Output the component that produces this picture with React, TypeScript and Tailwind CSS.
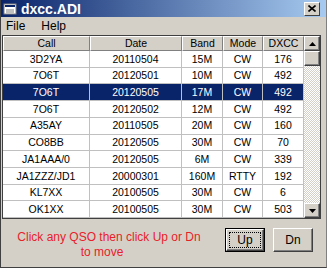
import React from 'react';

type Row = { call: string; date: string; band: string; mode: string; dxcc: string };

const rows: Row[] = [
  { call: '3D2YA', date: '20110504', band: '15M', mode: 'CW', dxcc: '176' },
  { call: '7O6T', date: '20120501', band: '10M', mode: 'CW', dxcc: '492' },
  { call: '7O6T', date: '20120505', band: '17M', mode: 'CW', dxcc: '492' },
  { call: '7O6T', date: '20120502', band: '12M', mode: 'CW', dxcc: '492' },
  { call: 'A35AY', date: '20110505', band: '20M', mode: 'CW', dxcc: '160' },
  { call: 'CO8BB', date: '20120505', band: '30M', mode: 'CW', dxcc: '70' },
  { call: 'JA1AAA/0', date: '20120505', band: '6M', mode: 'CW', dxcc: '339' },
  { call: 'JA1ZZZ/JD1', date: '20000301', band: '160M', mode: 'RTTY', dxcc: '192' },
  { call: 'KL7XX', date: '20100505', band: '30M', mode: 'CW', dxcc: '6' },
  { call: 'OK1XX', date: '20100505', band: '30M', mode: 'CW', dxcc: '503' },
];

const selected = 2;

const cols = [
  { key: 'call', label: 'Call', w: 'w-[87px]' },
  { key: 'date', label: 'Date', w: 'w-[92px]' },
  { key: 'band', label: 'Band', w: 'w-[41px]' },
  { key: 'mode', label: 'Mode', w: 'w-[40px]' },
  { key: 'dxcc', label: 'DXCC', w: 'w-[41px]' },
] as const;

function ScrollButton({ up }: { up?: boolean }) {
  return (
    <div className="flex h-[15px] w-[16px] items-center justify-center border border-t-white border-l-white border-b-[#404040] border-r-[#404040] bg-[#d4d0c8] shadow-[inset_-1px_-1px_0_#808080]">
      <svg width="7" height="4" viewBox="0 0 7 4">
        {up ? <polygon points="3.5,0 7,4 0,4" fill="#000" /> : <polygon points="0,0 7,0 3.5,4" fill="#000" />}
      </svg>
    </div>
  );
}

export default function App() {
  return (
    <div
      className="flex h-[268px] w-[327px] flex-col overflow-hidden border-b border-l border-r border-b-[#404040] border-l-[#404040] border-r-[#808080] bg-[#d4d0c8] text-black"
      style={{ fontFamily: '"Liberation Sans", Arial, sans-serif' }}
    >
      {/* Title bar */}
      <div className="flex h-[17px] shrink-0 items-center bg-[linear-gradient(to_right,#0a246a,#a6caf0)] pl-[2px] pr-[6px]">
        <svg width="16" height="14" viewBox="0 0 16 14" className="mr-[2px]">
          <rect x="1" y="2" width="12" height="10" fill="#fff" stroke="#808080" />
          <rect x="2" y="3" width="10" height="2" fill="#0a246a" />
          <rect x="3" y="7" width="8" height="4" fill="#c0c0c0" />
        </svg>
        <span className="text-[14px] font-bold leading-none text-white">dxcc.ADI</span>
        <div className="ml-auto flex h-[14px] w-[16px] items-center justify-center border border-t-white border-l-white border-b-[#404040] border-r-[#404040] bg-[#d4d0c8]">
          <svg width="8" height="7" viewBox="0 0 8 7">
            <path d="M0.5 0.5 L7.5 6.5 M7.5 0.5 L0.5 6.5" stroke="#000" strokeWidth="1.6" />
          </svg>
        </div>
      </div>

      {/* Menu */}
      <div className="flex h-[18px] shrink-0 items-center gap-[16px] pl-[5px] text-[12px]">
        <span>File</span>
        <span>Help</span>
      </div>

      {/* Grid */}
      <div className="ml-[1px] flex h-[184px] w-[319px] shrink-0 border border-[#404040] bg-white">
        <div className="flex w-[301px] flex-col text-[10.5px]">
          <div className="flex h-[15px] shrink-0">
            {cols.map((c) => (
              <div
                key={c.key}
                className={`${c.w} flex items-center justify-center border border-t-white border-l-white border-b-[#808080] border-r-[#808080] bg-[#d4d0c8] leading-none`}
              >
                {c.label}
              </div>
            ))}
          </div>
          {rows.map((r, i) => (
            <div
              key={i}
              className={`flex flex-1 ${i === selected ? 'bg-[#0a246a] text-white' : ''}`}
            >
              {cols.map((c) => (
                <div
                  key={c.key}
                  className={`${c.w} flex items-center justify-center border-b border-r border-[#c0c0c0] leading-none`}
                >
                  {r[c.key]}
                </div>
              ))}
            </div>
          ))}
        </div>
        <div className="flex w-[16px] flex-col">
          <ScrollButton up />
          <div className="h-[15px] w-[16px] border border-t-white border-l-white border-b-[#404040] border-r-[#404040] bg-[#d4d0c8] shadow-[inset_-1px_-1px_0_#808080]" />
          <div className="flex-1 bg-[repeating-conic-gradient(#d4d0c8_0_25%,#ffffff_0_50%)] bg-[length:2px_2px]" />
          <ScrollButton />
        </div>
      </div>

      {/* Bottom */}
      <div className="flex flex-1 items-start">
        <div className="ml-[10px] mt-[11px] w-[196px] text-center text-[12px] leading-[15px] text-[#e8202a]">
          <div>Click any QSO then click Up or Dn</div>
          <div className="pr-[14px]">to move</div>
        </div>
        <div className="ml-[18px] mt-[9px] flex gap-[8px]">
          <div className="flex h-[24px] w-[40px] border border-black bg-[#d4d0c8]">
            <div className="flex flex-1 p-[2px] border border-t-white border-l-white border-b-[#404040] border-r-[#404040] shadow-[inset_-1px_-1px_0_#808080]">
              <span className="flex flex-1 items-center justify-center border border-dotted border-black text-[12px] leading-none">Up</span>
            </div>
          </div>
          <div className="flex h-[24px] w-[40px] items-center justify-center border border-t-white border-l-white border-b-[#404040] border-r-[#404040] bg-[#d4d0c8] text-[12px] shadow-[inset_-1px_-1px_0_#808080]">
            Dn
          </div>
        </div>
      </div>
    </div>
  );
}
